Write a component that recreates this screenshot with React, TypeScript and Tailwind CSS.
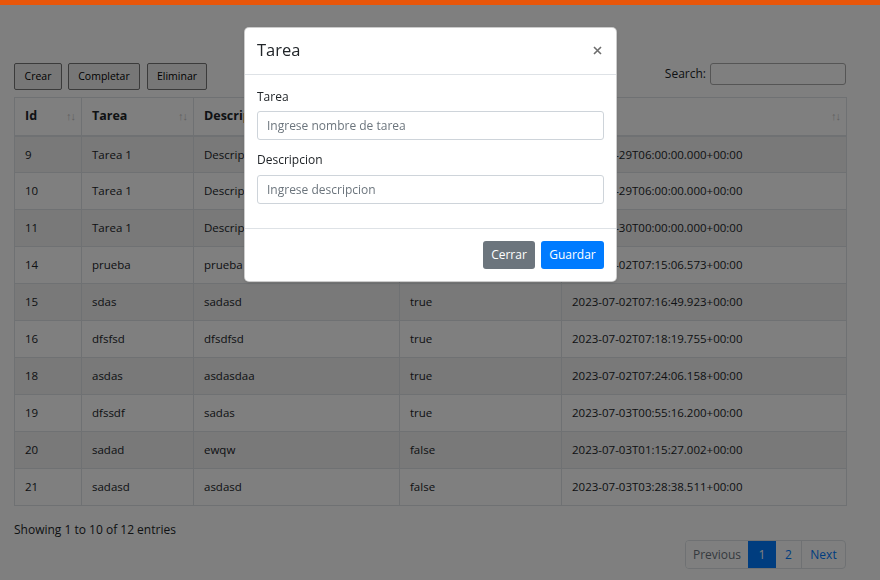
import React from 'react';

const rows = [
  { id: 9, tarea: 'Tarea 1', desc: 'Descripcion 1', done: 'false', fecha: '2023-06-29T06:00:00.000+00:00' },
  { id: 10, tarea: 'Tarea 1', desc: 'Descripcion 1', done: 'false', fecha: '2023-06-29T06:00:00.000+00:00' },
  { id: 11, tarea: 'Tarea 1', desc: 'Descripcion 1', done: 'false', fecha: '2023-06-30T00:00:00.000+00:00' },
  { id: 14, tarea: 'prueba', desc: 'prueba', done: 'true', fecha: '2023-07-02T07:15:06.573+00:00' },
  { id: 15, tarea: 'sdas', desc: 'sadasd', done: 'true', fecha: '2023-07-02T07:16:49.923+00:00' },
  { id: 16, tarea: 'dfsfsd', desc: 'dfsdfsd', done: 'true', fecha: '2023-07-02T07:18:19.755+00:00' },
  { id: 18, tarea: 'asdas', desc: 'asdasdaa', done: 'true', fecha: '2023-07-02T07:24:06.158+00:00' },
  { id: 19, tarea: 'dfssdf', desc: 'sadas', done: 'true', fecha: '2023-07-03T00:55:16.200+00:00' },
  { id: 20, tarea: 'sadad', desc: 'ewqw', done: 'false', fecha: '2023-07-03T01:15:27.002+00:00' },
  { id: 21, tarea: 'sadasd', desc: 'asdasd', done: 'false', fecha: '2023-07-03T03:28:38.511+00:00' },
];

const columns = [
  { label: 'Id', w: 'w-[67px]' },
  { label: 'Tarea', w: 'w-[112px]' },
  { label: 'Descripcion', w: 'w-[206px]' },
  { label: 'Completada', w: 'w-[162px]' },
  { label: 'Fecha', w: 'w-[285px]' },
];

function SortIcon() {
  return (
    <span className="absolute right-[6px] top-[12px] text-[11px] leading-none font-normal text-[#c2c2c2] tracking-[-1px]">
      ↑↓
    </span>
  );
}

export default function App() {
  return (
    <div className="min-h-screen bg-white text-[#212529] font-['Open_Sans',sans-serif] text-[11.5px]">
      {/* top bar sits above the backdrop */}
      <div className="relative z-50 h-[5px] bg-[#e8560a]" />

      <div className="px-[14px] pt-[58px]">
        <div className="w-[832px] flex items-center justify-between">
          <div className="flex gap-[6px]">
            <button className="h-[27px] w-[48px] border border-[#767676] bg-[#efefef] rounded-[2px] text-[10.5px] text-black">Crear</button>
            <button className="h-[27px] w-[72px] border border-[#767676] bg-[#efefef] rounded-[2px] text-[10.5px] text-black">Completar</button>
            <button className="h-[27px] w-[60px] ml-[1px] border border-[#767676] bg-[#efefef] rounded-[2px] text-[10.5px] text-black">Eliminar</button>
          </div>
          <label className="flex items-center gap-[4px] -mt-[6px] text-[12px]">
            Search:
            <input className="w-[136px] h-[22px] border border-[#aaa] rounded-[3px] bg-white" />
          </label>
        </div>

        <table className="mt-[7px] w-[832px] border-collapse border border-[#dee2e6] table-fixed">
          <thead>
            <tr className="h-[38px]">
              {columns.map((c) => (
                <th key={c.label} className={`${c.w} relative border border-[#dee2e6] border-b-2 text-left font-bold px-[10px] text-[12.5px]`}>
                  {c.label}
                  <SortIcon />
                </th>
              ))}
            </tr>
          </thead>
          <tbody>
            {rows.map((r, i) => (
              <tr key={r.id} className={i % 2 === 0 ? 'h-[37px] bg-[#f2f2f2]' : 'h-[37px] bg-white'}>
                <td className="border border-[#dee2e6] px-[10px]">{r.id}</td>
                <td className="border border-[#dee2e6] px-[10px]">{r.tarea}</td>
                <td className="border border-[#dee2e6] px-[10px]">{r.desc}</td>
                <td className="border border-[#dee2e6] px-[10px]">{r.done}</td>
                <td className="border border-[#dee2e6] px-[10px]">{r.fecha}</td>
              </tr>
            ))}
          </tbody>
        </table>

        <div className="w-[832px]">
          <div className="pt-[16px] leading-[16px] text-[12px]">Showing 1 to 10 of 12 entries</div>
          <div className="flex justify-end mt-[2px]">
            <div className="flex h-[29px] rounded-[4px] border border-[#dee2e6] overflow-hidden text-[12px]">
              <span className="w-[62px] flex items-center justify-center text-[#6c757d] bg-white">Previous</span>
              <span className="w-[28px] flex items-center justify-center bg-[#007bff] text-white">1</span>
              <span className="w-[26px] flex items-center justify-center text-[#007bff] border-r border-[#dee2e6]">2</span>
              <span className="w-[43px] flex items-center justify-center text-[#007bff]">Next</span>
            </div>
          </div>
        </div>
      </div>

      {/* backdrop */}
      <div className="fixed inset-0 z-40 bg-black/50" />

      {/* modal */}
      <div className="fixed inset-0 z-50 flex justify-center items-start pt-[27px] pr-[19px]">
        <div className="w-[373px] bg-white rounded-[5px] border border-black/20 shadow-sm">
          <div className="h-[47px] flex items-center justify-between px-[12px] border-b border-[#dee2e6]">
            <h5 className="text-[16.5px] text-[#212529] -mt-[2px]">Tarea</h5>
            <svg width="9" height="9" viewBox="0 0 9 9" className="mr-[2px] -mt-[1px]">
              <path d="M1 1L8 8M8 1L1 8" stroke="#6d6d6d" strokeWidth="1.6" />
            </svg>
          </div>
          <div className="px-[12px] pt-[14px] pb-[24px]">
            <div className="leading-[16px] text-[12px]">Tarea</div>
            <input
              placeholder="Ingrese nombre de tarea"
              className="block mt-[6px] w-full h-[29px] px-[9px] border border-[#ced4da] rounded-[3px] text-[12px] placeholder:text-[#6c757d] outline-none"
            />
            <div className="mt-[12px] leading-[16px] text-[12px]">Descripcion</div>
            <input
              placeholder="Ingrese descripcion"
              className="block mt-[7px] w-full h-[29px] px-[9px] border border-[#ced4da] rounded-[3px] text-[12px] placeholder:text-[#6c757d] outline-none"
            />
          </div>
          <div className="border-t border-[#dee2e6] flex justify-end gap-[6px] px-[12px] pt-[12px] pb-[12px]">
            <button className="h-[28px] w-[52px] rounded-[3px] bg-[#6c757d] text-white text-[12px]">Cerrar</button>
            <button className="h-[28px] w-[63px] rounded-[3px] bg-[#007bff] text-white text-[12px]">Guardar</button>
          </div>
        </div>
      </div>
    </div>
  );
}
